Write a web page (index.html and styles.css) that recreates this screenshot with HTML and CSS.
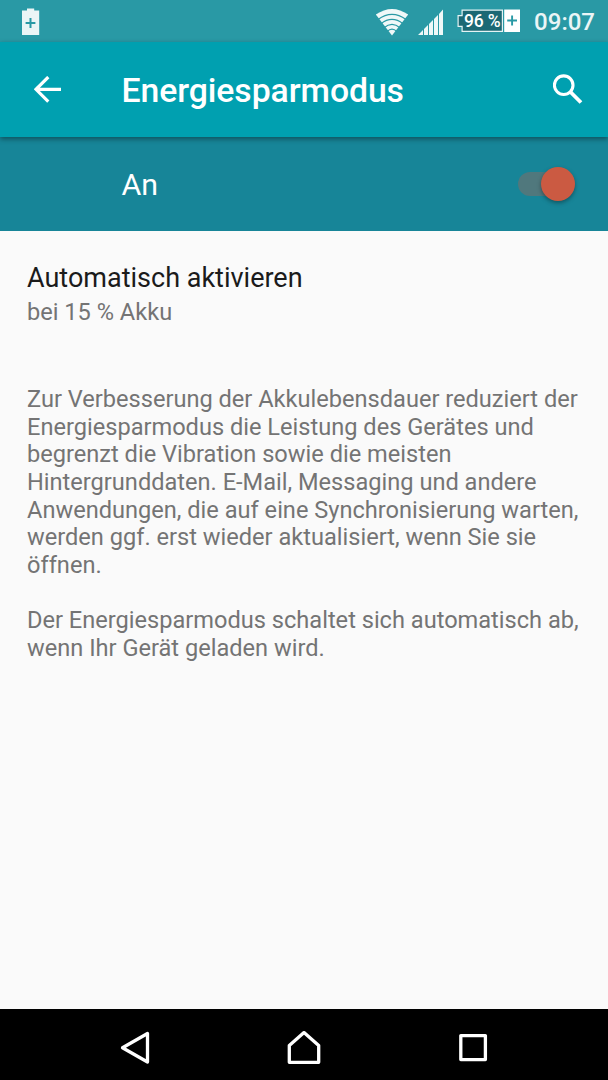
FILE: index.html
```html
<!DOCTYPE html>
<html lang="de">
<head>
<meta charset="utf-8">
<title>Energiesparmodus</title>
<link rel="stylesheet" href="styles.css">
</head>
<body>
<div class="screen">
  <header class="status-bar">
    <svg class="saver-icon" width="18" height="28" viewBox="0 0 18 28">
      <path fill="#ebf5f6" fill-rule="evenodd" d="M5 0.500h7.200v2H17.200V27H0V2.500H5zM7.500 10v4H3.600v2h3.900v4h2v-4h3.900v-2H9.500v-4z"/>
    </svg>
    <div class="status-icons">
      <svg class="wifi-icon" width="34" height="28" viewBox="0 0 34 28">
        <path fill="#eff8f8" d="M17 27.500L0.800 6.600Q17-4.800 33.200 6.600Z"/>
        <g fill="none" stroke="#2999a5" stroke-width="1.300">
          <path d="M3 11.500Q17 1.300 31 11.500"/>
          <path d="M6 15.700Q17 7.200 28 15.700"/>
          <path d="M9 19.700Q17 13 25 19.700"/>
          <path d="M12 23.600Q17 18.600 22 23.600"/>
        </g>
      </svg>
      <svg class="signal-icon" width="26" height="27" viewBox="0 0 26 27">
        <path fill="#eff8f8" d="M0 26L5 21V26zM6 26V20L10 16V26zM11 26V15L15 11V26zM16 26V10L20 6V26zM21 26V5L25 0.500V26z"/>
      </svg>
      <div class="battery">
        <svg class="battery-shape" width="64" height="24" viewBox="0 0 64 24">
          <path fill="#1c6874" stroke="#e4f3f4" stroke-width="1.200" d="M6.100 1.100H46.400V22.400H6.100V17.400H2.100V6.600H6.100z"/>
          <path fill="#fff" d="M48.200 0.500H64V23H48.200z"/>
          <path stroke="#2999a5" stroke-width="1.900" d="M51.200 11.500h9.800M56.100 6.600v9.800"/>
        </svg>
        <span class="battery-level">96 %</span>
      </div>
      <span class="clock">09:07</span>
    </div>
  </header>
  <div class="app-bar">
    <svg class="back-icon" width="28" height="28" viewBox="0 0 28 28">
      <path fill="none" stroke="#fff" stroke-width="3.200" d="M27 13.300H2.500M14.300 1L2 13.300L14.300 25.600"/>
    </svg>
    <h1 class="title">Energiesparmodus</h1>
    <svg class="search-icon" width="30" height="30" viewBox="0 0 30 30">
      <g fill="none" stroke="#fff">
        <circle cx="10.700" cy="11.200" r="9.300" stroke-width="3.100"/>
        <path stroke-width="3.800" d="M17.500 18L28 28.500"/>
      </g>
    </svg>
  </div>
  <div class="switch-bar">
    <span class="switch-label">An</span>
    <span class="switch"><span class="thumb"></span></span>
  </div>
  <main class="content">
    <div class="preference">
      <div class="pref-title">Automatisch aktivieren</div>
      <div class="pref-summary">bei 15 % Akku</div>
    </div>
    <div class="description">
      <p>Zur Verbesserung der Akkulebensdauer reduziert der<br>Energiesparmodus die Leistung des Gerätes und<br>begrenzt die Vibration sowie die meisten<br>Hintergrunddaten. E-Mail, Messaging und andere<br>Anwendungen, die auf eine Synchronisierung warten,<br>werden ggf. erst wieder aktualisiert, wenn Sie sie<br>öffnen.</p>
      <p>Der Energiesparmodus schaltet sich automatisch ab,<br>wenn Ihr Gerät geladen wird.</p>
    </div>
  </main>
  <nav class="nav-bar">
    <svg width="32" height="34" viewBox="0 0 32 34">
      <path fill="none" stroke="#fff" stroke-width="3.300" stroke-linejoin="round" d="M27.500 2.500V31L2.500 16.700z"/>
    </svg>
    <svg width="34" height="34" viewBox="0 0 34 34">
      <path fill="none" stroke="#fff" stroke-width="3.300" stroke-linejoin="round" d="M17 1.600L31.700 14.500V31.300H2.300V14.500z"/>
    </svg>
    <svg width="30" height="30" viewBox="0 0 30 30">
      <rect x="2.800" y="2.600" width="24.600" height="24" fill="none" stroke="#fff" stroke-width="3.300" stroke-linejoin="round"/>
    </svg>
  </nav>
</div>
</body>
</html>
```

FILE: styles.css
```css
* { box-sizing: border-box; }

body {
  margin: 0;
  font-family: Roboto, "Liberation Sans", sans-serif;
  background: #fafafa;
}

.screen {
  display: flex;
  flex-direction: column;
  width: 608px;
  height: 1080px;
  overflow: hidden;
  background: #fafafa;
}

svg { display: block; flex: none; }

.status-bar {
  display: flex;
  flex: none;
  justify-content: space-between;
  height: 42px;
  padding: 0 13px 0 22px;
  background: #2999a5;
}

.saver-icon { margin-top: 7.500px; }

.status-icons { display: flex; }

.wifi-icon { margin-top: 8px; }

.signal-icon { margin: 9px 0 0 9px; }

.battery {
  position: relative;
  width: 64px;
  height: 24px;
  margin: 9px 0 0 12px;
}

.battery-level {
  position: absolute;
  top: 0;
  left: 8px;
  width: 39px;
  font-size: 17.500px;
  font-weight: 500;
  letter-spacing: -0.200px;
  line-height: 24px;
  white-space: nowrap;
  color: #fff;
}

.clock {
  margin-left: 14px;
  font-size: 24px;
  font-weight: 500;
  line-height: 44px;
  color: #eaf5f6;
}

.app-bar {
  position: relative;
  display: flex;
  flex: none;
  align-items: center;
  height: 95px;
  padding: 0 25px 0 34px;
  background: #00a0b0;
  box-shadow: 0 2px 5px rgba(0, 0, 0, 0.4);
}

.search-icon { margin-bottom: 1px; }

.title {
  flex: 1;
  margin: 3px 0 0 59.500px;
  font-size: 33.750px;
  font-weight: 500;
  letter-spacing: -0.070px;
  line-height: 40px;
  color: #fff;
}

.switch-bar {
  display: flex;
  flex: none;
  align-items: center;
  justify-content: space-between;
  height: 94px;
  padding: 0 33px 0 121.500px;
  background: #178598;
}

.switch-label {
  margin-top: 1px;
  font-size: 30.400px;
  line-height: 36px;
  color: #fff;
}

.switch {
  display: flex;
  align-items: center;
  justify-content: flex-end;
  width: 57px;
  height: 24px;
  border-radius: 12px;
  background: #50787d;
}

.thumb {
  width: 34px;
  height: 34px;
  border-radius: 50%;
  background: #cb5a42;
  box-shadow: 0 2px 4px rgba(0, 0, 0, 0.35);
}

.content {
  flex: 1;
  padding: 31px 20px 0 27px;
}

.pref-title {
  font-size: 27px;
  line-height: 32px;
  color: #1b1b1b;
}

.pref-summary {
  margin-top: 4px;
  font-size: 23.600px;
  line-height: 28px;
  color: #747474;
}

.description {
  margin-top: 60.300px;
  font-size: 23.600px;
  line-height: 27.580px;
  white-space: nowrap;
  color: #747474;
}

.description p { margin: 0 0 27.580px; }

.nav-bar {
  display: flex;
  flex: none;
  align-items: center;
  justify-content: space-between;
  height: 71px;
  padding: 6px 120px 0 119px;
  background: #000;
}

.nav-bar svg:first-child { margin: 0 -1px 0 1px; }

.nav-bar svg:nth-child(2) { margin: 0 1px 0 -1px; }
```
